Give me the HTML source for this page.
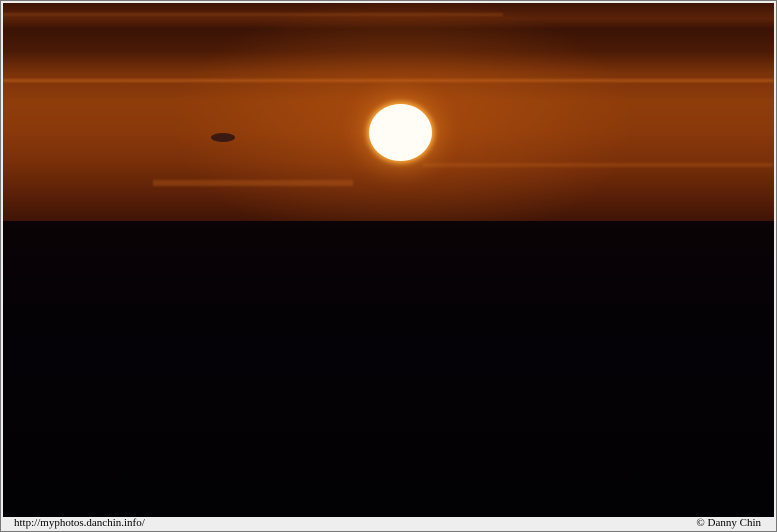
<!DOCTYPE html><html><head><style>
body{margin:0;width:777px;height:532px;background:#eeeeee;position:relative;overflow:hidden;font-family:"Liberation Serif",serif}
.frame{position:absolute;left:0;top:0;width:775px;height:530px;border:1px solid #777;background:#eee}
.ph{position:absolute;left:3px;top:3px;width:771px;height:514px;background:#020104;overflow:hidden}
.sky{position:absolute;left:0;top:0;width:771px;height:219px;background:linear-gradient(180deg,#3e1406 0%,#5a2208 7%,#3a1305 12%,#4a1a06 22%,#7a3209 32%,#8e3c0a 45%,#8a390a 58%,#7a3009 72%,#5e2208 86%,#3e1406 100%)}
.glow{position:absolute;left:150px;top:-20px;width:500px;height:280px;background:radial-gradient(ellipse at center,rgba(210,100,20,.4),rgba(0,0,0,0) 65%)}
.band{position:absolute;height:3px;background:rgba(210,110,30,.6);filter:blur(1px)}
.sun{position:absolute;left:366px;top:101px;width:63px;height:57px;border-radius:50%;background:#fffdf5;box-shadow:0 0 6px 2px #ffb040,0 0 24px 8px rgba(240,140,40,.45)}
.dark{position:absolute;left:0;top:218px;width:771px;height:296px;background:linear-gradient(180deg,#0b0306 0%,#050206 30%,#020104 100%)}
.cap{position:absolute;top:517px;font-size:11px;color:#000}
</style></head><body>
<div class="frame"></div>
<div class="ph">
<div class="sky"></div><div class="glow"></div>
<div class="band" style="left:0;top:76px;width:771px;opacity:.8"></div>
<div class="band" style="left:0;top:10px;width:500px;opacity:.4"></div>
<div class="band" style="left:150px;top:177px;width:200px;height:6px;opacity:.5"></div>
<div class="band" style="left:420px;top:160px;width:350px;height:4px;opacity:.4"></div>
<div style="position:absolute;left:208px;top:130px;width:24px;height:9px;border-radius:50%;background:#3a1a10"></div>
<div class="sun"></div>
<div class="dark"></div>
</div>
<div class="cap" style="left:14px">http://myphotos.danchin.info/</div>
<div class="cap" style="right:16px">© Danny Chin</div>
</body></html>
